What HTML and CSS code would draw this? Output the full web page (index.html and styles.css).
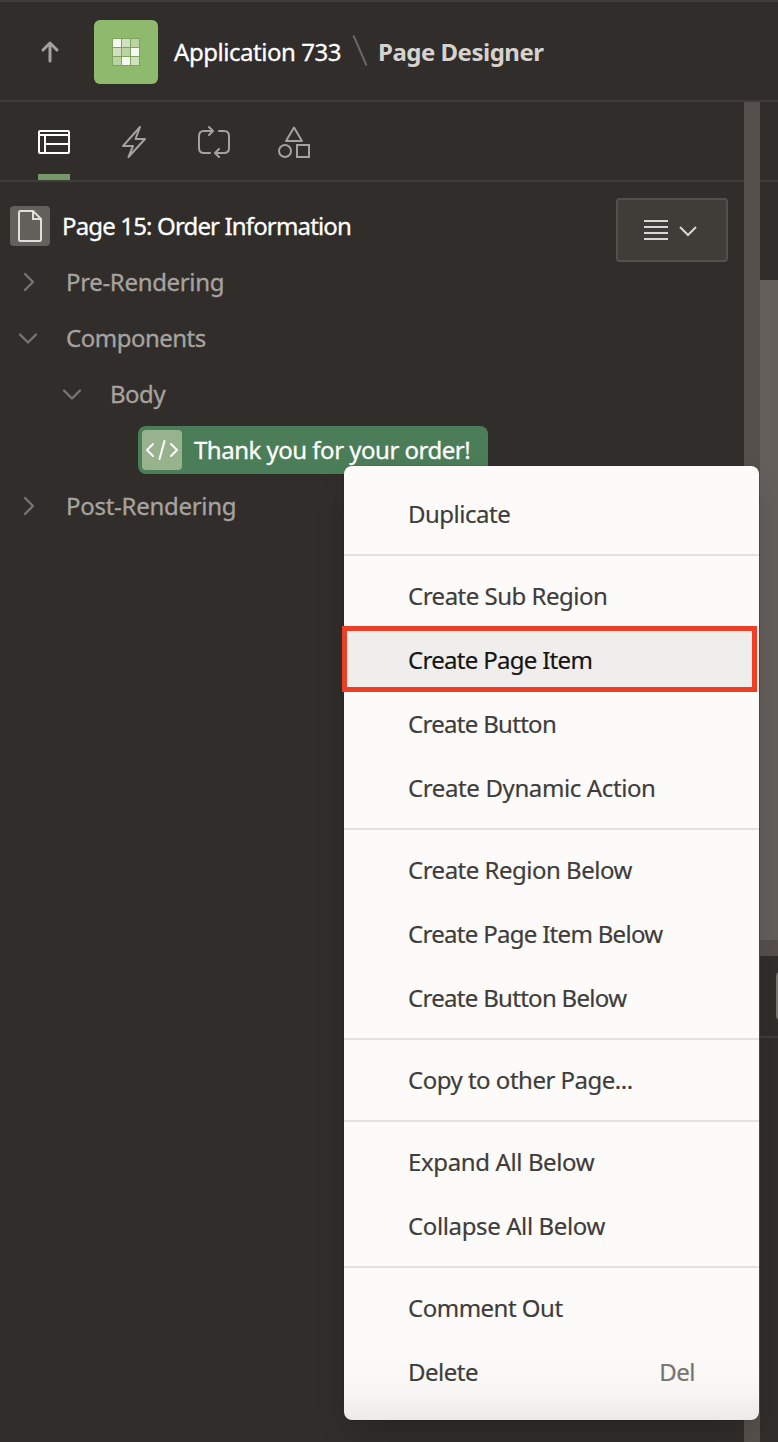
FILE: index.html
```html
<!DOCTYPE html>
<html lang="en">
<head>
<meta charset="utf-8">
<title>Page Designer</title>
<link rel="stylesheet" href="styles.css">
</head>
<body>
<div class="app">
  <header class="header">
    <svg class="up" viewBox="0 0 20 24" width="20" height="24"><path d="M10 22V4M3 11l7-7 7 7"/></svg>
    <div class="logo">
      <svg viewBox="0 0 28 28" width="28" height="28">
        <rect width="28" height="28" fill="#7da35f"/>
        <g fill="#d1e1c0"><path d="M10 1h8v8h-8zM1 10h8v8H1zM19 19h8v8h-8z"/></g>
        <g fill="#b9d4a1"><path d="M19 1h8v8h-8zM10 10h8v8h-8zM1 19h8v8H1z"/></g>
        <g fill="#f5f9f1"><path d="M1 1h8v8H1zM19 10h8v8h-8zM10 19h8v8h-8z"/></g>
      </svg>
    </div>
    <span class="crumb crumb-app">Application 733</span>
    <svg class="slash" viewBox="0 0 18 34" width="18" height="34"><path d="M2.500 1.500l13 30"/></svg>
    <span class="crumb crumb-page">Page Designer</span>
  </header>
  <div class="workspace">
    <main class="left">
      <nav class="tabs">
        <a class="tab active"><svg viewBox="0 0 32 32" width="32" height="32"><rect x="1" y="5" width="30" height="22" rx="1"/><path d="M1 9h30M7 9v18M7 18h24"/></svg></a>
        <a class="tab"><svg viewBox="0 0 32 32" width="32" height="32"><path d="M22 1L5 20h10L10.500 31 27 13H17.500z" stroke-linejoin="round"/></svg></a>
        <a class="tab"><svg viewBox="0 0 32 32" width="32" height="32"><path d="M12 27H6q-5 0-5-5V10q0-5 5-5h9M11 1l4 4-4 4M21 5h5q5 0 5 5v12q0 5-5 5h-8M21 23l-4 4 4 4" stroke-linecap="round" stroke-linejoin="round"/></svg></a>
        <a class="tab"><svg viewBox="0 0 32 32" width="32" height="32"><path d="M16 1.500L24 15H8z" stroke-linejoin="round"/><circle cx="7" cy="25" r="6"/><rect x="19" y="19" width="12" height="12"/></svg></a>
      </nav>
      <section class="panel">
        <ul class="tree">
          <li class="row root">
            <span class="page-icon"><svg viewBox="0 0 40 40" width="40" height="40"><path d="M10.500 5H23l8 8v20.500q0 1.500-1.500 1.500h-19Q9 35 9 33.500v-27Q9 5 10.500 5zM23 5v8h8"/></svg></span>
            <span class="t-page">Page 15: Order Information</span>
          </li>
          <li class="row"><svg class="chev" viewBox="0 0 20 20" width="20" height="20"><path d="M7 2l8 8-8 8"/></svg><span class="t-pre">Pre-Rendering</span></li>
          <li class="row"><svg class="chev" viewBox="0 0 20 20" width="20" height="20"><path d="M2 6.500l8 8 8-8"/></svg><span class="t-comp">Components</span></li>
          <li class="row level-2"><svg class="chev" viewBox="0 0 20 20" width="20" height="20"><path d="M2 6.500l8 8 8-8"/></svg><span class="t-body">Body</span></li>
          <li class="row level-3">
            <div class="selected">
              <span class="code-icon"><svg viewBox="0 0 40 40" width="40" height="40"><path d="M11 14l-6 6 6 6M29 14l6 6-6 6M22.500 11l-5 18"/></svg></span>
              <span class="t-thank">Thank you for your order!</span>
            </div>
          </li>
          <li class="row"><svg class="chev" viewBox="0 0 20 20" width="20" height="20"><path d="M7 2l8 8-8 8"/></svg><span class="t-post">Post-Rendering</span></li>
        </ul>
        <button class="options" aria-label="Options">
          <svg viewBox="0 0 56 24" width="56" height="24"><path d="M0 3h24M0 9h24M0 15h24M0 21h24M36 9l8 8 8-8"/></svg>
        </button>
      </section>
    </main>
    <div class="splitter"></div>
    <aside class="right">
      <div class="right-tabs"></div>
      <div class="right-bar"></div>
      <div class="canvas"></div>
      <div class="h-splitter"></div>
      <div class="gallery"><div class="gallery-button"></div></div>
    </aside>
  </div>
  <div class="menu">
    <div class="group"><div class="item"><span>Duplicate</span></div></div>
    <div class="group">
      <div class="item"><span>Create Sub Region</span></div>
      <div class="item hover"><span class="tight">Create Page Item</span></div>
      <div class="item"><span class="tight">Create Button</span></div>
      <div class="item"><span class="loose">Create Dynamic Action</span></div>
    </div>
    <div class="group">
      <div class="item"><span>Create Region Below</span></div>
      <div class="item"><span class="tight">Create Page Item Below</span></div>
      <div class="item"><span class="tight">Create Button Below</span></div>
    </div>
    <div class="group"><div class="item"><span>Copy to other Page...</span></div></div>
    <div class="group">
      <div class="item"><span class="loose">Expand All Below</span></div>
      <div class="item"><span class="loose">Collapse All Below</span></div>
    </div>
    <div class="group">
      <div class="item"><span>Comment Out</span></div>
      <div class="item"><span>Delete</span><span class="key">Del</span></div>
    </div>
  </div>
</div>
</body>
</html>
```
FILE: styles.css
```css
*, *::after { box-sizing: border-box; }
body { margin: 0; background: #312d2a; font-family: "Noto Sans", sans-serif; font-size: 24px; line-height: 32px; letter-spacing: -0.5px; }
svg { display: block; flex: none; fill: none; stroke-width: 2; }
span { white-space: nowrap; }
.app { position: relative; width: 778px; height: 1442px; overflow: hidden; display: flex; flex-direction: column; }
.header { height: 102px; flex: none; display: flex; align-items: center; border-top: 2px solid #403c38; border-bottom: 2px solid #403c38; padding-left: 40px; }
.up { stroke: #a5a19e; stroke-width: 3; stroke-linecap: round; stroke-linejoin: round; margin-right: 34px; }
.logo { width: 64px; height: 64px; margin: 2px 16px 0 0; border-radius: 6px; background: #8fb96d; display: flex; align-items: center; justify-content: center; }
.logo svg { stroke: none; }
.crumb { padding-top: 2px; }
.crumb-app { color: #fff; width: 177px; letter-spacing: -0.45px; -webkit-text-stroke: 0.3px; }
.slash { stroke: #6b6764; }
.crumb-page { color: #d5d2cf; font-weight: 700; margin-left: 9px; }
.workspace { flex: 1; display: grid; grid-template-columns: 744px 16px 18px; }
.tabs { height: 80px; display: flex; gap: 48px; padding-left: 38px; border-bottom: 2px solid #403c38; }
.tab { width: 32px; height: 78px; padding-top: 24px; stroke: #a5a19e; }
.tab.active { stroke: #fff; border-bottom: 6px solid #759769; }
.panel { display: flex; justify-content: space-between; padding: 16px 16px 0 0; }
.tree { list-style: none; margin: 0; padding: 0; color: #a6a3a0; -webkit-text-stroke: 0.3px; }
.row { height: 56px; display: flex; align-items: center; gap: 28px; padding-left: 18px; }
.chev { stroke: #77736f; stroke-width: 2.4; stroke-linecap: round; stroke-linejoin: round; }
.root { padding-left: 10px; gap: 12px; color: #fff; }
.t-page { letter-spacing: -0.85px; }
.t-pre { letter-spacing: -0.34px; }
.t-post { letter-spacing: -0.28px; }
.page-icon { background: #64605b; border-radius: 4px; stroke: #e1dfdc; }
.level-2 { padding-left: 62px; }
.level-3 { padding-left: 138px; }
.selected { width: 350px; height: 48px; padding: 4px; display: flex; align-items: center; gap: 12px; border-radius: 8px; background: #4b7d58; color: #fff; }
.code-icon { background: #98b28d; border-radius: 4px; stroke: #fff; stroke-linecap: round; stroke-linejoin: round; }
.options { width: 112px; height: 64px; padding: 0 0 0 26px; border: 2px solid #55504b; border-radius: 4px; background: #403c38; stroke: #d9d7d4; }
.splitter { background: #55504b; }
.right { display: flex; flex-direction: column; }
.right-tabs { height: 80px; border-bottom: 2px solid #403c38; }
.right-bar { height: 98px; }
.canvas { height: 660px; background: #645f5a; }
.h-splitter { height: 16px; background: #55504b; }
.gallery { height: 82px; padding: 16px 0 0 16px; border-bottom: 2px solid #403c38; overflow: hidden; }
.gallery-button { width: 20px; height: 48px; border: 2px solid #77736f; border-radius: 4px; }
.menu { position: absolute; left: 344px; top: 466px; width: 415px; height: 954px; padding: 8px 0; border-radius: 8px; color: #403c3a; background: linear-gradient(#fcfbf9 0, #fcfbf9 888px, #f7f6f5 926px, #ebeae9 954px); box-shadow: 0 0 1px rgba(0,0,0,.5), 0 16px 32px -8px rgba(0,0,0,.22); -webkit-text-stroke: 0.2px; }
.group { padding: 8px 0; }
.group + .group { border-top: 2px solid #e4e2e0; }
.item { position: relative; height: 64px; display: flex; align-items: center; justify-content: space-between; padding: 0 64px; }
.tight { letter-spacing: -0.7px; }
.loose { letter-spacing: -0.38px; }
.hover { background: #f0eeec; color: #161513; }
.hover::after { content: ""; position: absolute; left: -2px; top: -2px; width: 415px; height: 66px; border: 5px solid #ed3f26; }
.key { color: #77736f; }
```
